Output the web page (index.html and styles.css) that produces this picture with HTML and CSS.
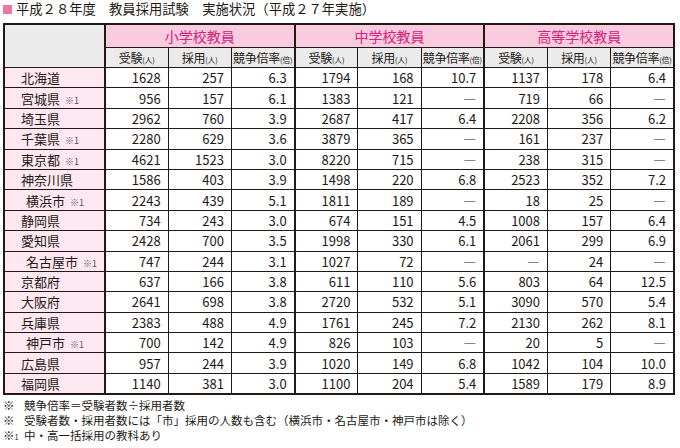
FILE: index.html
```html
<!DOCTYPE html>
<html lang="ja">
<head>
<meta charset="utf-8">
<link rel="stylesheet" href="styles.css">
</head>
<body>
<div class="page">
  <h1 class="title"><span class="mark"></span>平成２８年度　教員採用試験　実施状況（平成２７年実施）</h1>
  <table class="tbl">
    <colgroup>
      <col class="c-name">
      <col><col><col><col><col><col><col><col><col>
    </colgroup>
    <thead>
      <tr class="h1">
        <th class="corner g" rowspan="2"></th>
        <th colspan="3" class="g">小学校教員</th>
        <th colspan="3" class="g">中学校教員</th>
        <th colspan="3" class="g">高等学校教員</th>
      </tr>
      <tr class="h2">
        <th class="g">受験<small>(人)</small></th><th>採用<small>(人)</small></th><th>競争倍率<small>(倍)</small></th>
        <th class="g">受験<small>(人)</small></th><th>採用<small>(人)</small></th><th>競争倍率<small>(倍)</small></th>
        <th class="g">受験<small>(人)</small></th><th>採用<small>(人)</small></th><th>競争倍率<small>(倍)</small></th>
      </tr>
    </thead>
    <tbody>
      <tr><th>北海道</th><td class="g">1628</td><td>257</td><td>6.3</td><td class="g">1794</td><td>168</td><td>10.7</td><td class="g">1137</td><td>178</td><td>6.4</td></tr>
      <tr><th>宮城県<span class="note">※1</span></th><td class="g">956</td><td>157</td><td>6.1</td><td class="g">1383</td><td>121</td><td>―</td><td class="g">719</td><td>66</td><td>―</td></tr>
      <tr><th>埼玉県</th><td class="g">2962</td><td>760</td><td>3.9</td><td class="g">2687</td><td>417</td><td>6.4</td><td class="g">2208</td><td>356</td><td>6.2</td></tr>
      <tr><th>千葉県<span class="note">※1</span></th><td class="g">2280</td><td>629</td><td>3.6</td><td class="g">3879</td><td>365</td><td>―</td><td class="g">161</td><td>237</td><td>―</td></tr>
      <tr><th>東京都<span class="note">※1</span></th><td class="g">4621</td><td>1523</td><td>3.0</td><td class="g">8220</td><td>715</td><td>―</td><td class="g">238</td><td>315</td><td>―</td></tr>
      <tr><th>神奈川県</th><td class="g">1586</td><td>403</td><td>3.9</td><td class="g">1498</td><td>220</td><td>6.8</td><td class="g">2523</td><td>352</td><td>7.2</td></tr>
      <tr><th class="city">横浜市<span class="note">※1</span></th><td class="g">2243</td><td>439</td><td>5.1</td><td class="g">1811</td><td>189</td><td>―</td><td class="g">18</td><td>25</td><td>―</td></tr>
      <tr><th>静岡県</th><td class="g">734</td><td>243</td><td>3.0</td><td class="g">674</td><td>151</td><td>4.5</td><td class="g">1008</td><td>157</td><td>6.4</td></tr>
      <tr><th>愛知県</th><td class="g">2428</td><td>700</td><td>3.5</td><td class="g">1998</td><td>330</td><td>6.1</td><td class="g">2061</td><td>299</td><td>6.9</td></tr>
      <tr><th class="city">名古屋市<span class="note">※1</span></th><td class="g">747</td><td>244</td><td>3.1</td><td class="g">1027</td><td>72</td><td>―</td><td class="g">―</td><td>24</td><td>―</td></tr>
      <tr><th>京都府</th><td class="g">637</td><td>166</td><td>3.8</td><td class="g">611</td><td>110</td><td>5.6</td><td class="g">803</td><td>64</td><td>12.5</td></tr>
      <tr><th>大阪府</th><td class="g">2641</td><td>698</td><td>3.8</td><td class="g">2720</td><td>532</td><td>5.1</td><td class="g">3090</td><td>570</td><td>5.4</td></tr>
      <tr><th>兵庫県</th><td class="g">2383</td><td>488</td><td>4.9</td><td class="g">1761</td><td>245</td><td>7.2</td><td class="g">2130</td><td>262</td><td>8.1</td></tr>
      <tr><th class="city">神戸市<span class="note">※1</span></th><td class="g">700</td><td>142</td><td>4.9</td><td class="g">826</td><td>103</td><td>―</td><td class="g">20</td><td>5</td><td>―</td></tr>
      <tr><th>広島県</th><td class="g">957</td><td>244</td><td>3.9</td><td class="g">1020</td><td>149</td><td>6.8</td><td class="g">1042</td><td>104</td><td>10.0</td></tr>
      <tr><th>福岡県</th><td class="g">1140</td><td>381</td><td>3.0</td><td class="g">1100</td><td>204</td><td>5.4</td><td class="g">1589</td><td>179</td><td>8.9</td></tr>
    </tbody>
  </table>
  <div class="notes">
    <p><span class="k">※</span>競争倍率＝受験者数÷採用者数</p>
    <p><span class="k">※</span>受験者数・採用者数には「市」採用の人数も含む（横浜市・名古屋市・神戸市は除く）</p>
    <p><span class="k k1">※<small>1</small></span>中・高一括採用の教科あり</p>
  </div>
</div>
</body>
</html>
```
FILE: styles.css
```css
html, body {
  margin: 0;
  padding: 0;
  background: #ffffff;
}
body {
  font-family: "Noto Sans CJK JP", "Noto Sans", sans-serif;
  color: #231815;
}
.page {
  width: 680px;
  height: 448px;
  padding: 0 5px 0 3px;
  box-sizing: border-box;
}
.title {
  margin: 0;
  height: 23px;
  display: flex;
  align-items: center;
  font-size: 13.3px;
  font-weight: normal;
  line-height: 1;
  color: #231815;
  padding-bottom: 5px;
  box-sizing: border-box;
}
.mark {
  width: 9px;
  height: 9px;
  background: #ee74a8;
  margin-right: 4px;
  flex: none;
}
.tbl {
  width: 672px;
  border-collapse: collapse;
  table-layout: fixed;
  border: 2px solid #231815;
  font-size: 13px;
  line-height: 1;
}
.c-name { width: 101px; }
.tbl th, .tbl td {
  border: 1px solid #231815;
  padding: 0;
  font-weight: normal;
  white-space: nowrap;
}
.tbl .g { border-left: 2px solid #231815; }
.tbl .h1 th {
  height: 22px;
  background: #f9cbdf;
  color: #d6217a;
  font-size: 14px;
  text-align: center;
}
.tbl .h1 th.corner {
  background: #ebebeb;
}
.tbl .h2 th {
  height: 19px;
  background: #ebebeb;
  text-align: center;
  font-size: 12px;
  letter-spacing: -0.3px;
  overflow: hidden;
}
.h2 small, .k1 small {
  font-size: 7.5px;
  letter-spacing: 0;
}
.tbl tbody tr { height: 20.4px; }
.tbl tbody th {
  background: #fde8f1;
  text-align: left;
  padding-left: 16px;
}
.tbl tbody th.city { padding-left: 21px; }
.note {
  font-size: 9px;
  color: #555;
  margin-left: 5px;
}
.tbl tbody td {
  text-align: right;
  padding-right: 7px;
}
.notes {
  margin-top: 3px;
  font-size: 11.5px;
  line-height: 15px;
  color: #231815;
}
.notes p { margin: 0; }
.k {
  display: inline-block;
  width: 21px;
}
```
